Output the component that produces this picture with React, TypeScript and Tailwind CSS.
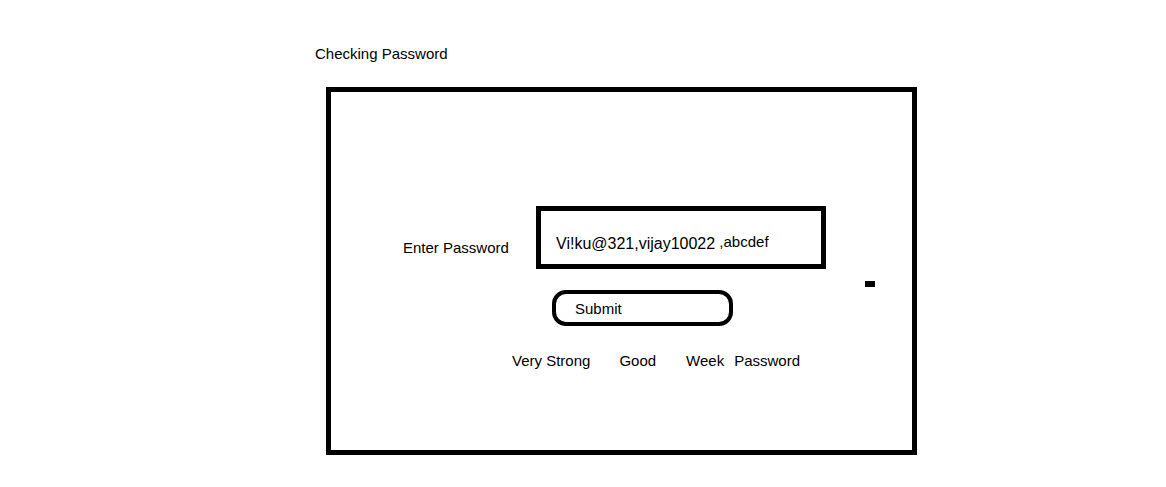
import { useState } from "react";

export default function App() {
  const [password, setPassword] = useState("");

  return (
    <div
      className="min-h-screen bg-white text-black"
      style={{ fontFamily: '"Liberation Sans", Arial, sans-serif' }}
    >
      {/* Title */}
      <div className="pl-[315px] pt-[45px] text-[15px] leading-[17px]">Checking Password</div>

      {/* Main box */}
      <div className="ml-[326px] mt-[25px] w-[591px] h-[368px] border-[5px] border-black">
        {/* Password row */}
        <div className="flex items-start pl-[72px] pt-[114px]">
          <label className="w-[133px] pt-[33px] text-[15px] leading-[17px]">Enter Password</label>
          <div className="w-[290px] h-[63px] border-[5px] border-black pl-[15px] pt-[22px] text-[16px] leading-[18px] whitespace-nowrap">
            <span>Vi!ku@321,vijay10022</span>
            <span className="text-[15px] align-[2px]"> ,abcdef</span>
            <input
              type="hidden"
              value={password}
              onChange={(e) => setPassword(e.target.value)}
            />
          </div>
        </div>

        {/* Submit row */}
        <div className="flex items-start pl-[221px] mt-[12px]">
          <button className="mt-[9px] w-[181px] h-[36px] border-4 border-black rounded-[14px] text-left pl-[19px] text-[15px] leading-[17px]">
            Submit
          </button>
          <div className="ml-[132px] w-[10px] h-[6px] bg-black" />
        </div>

        {/* Strength labels */}
        <div className="flex pl-[181px] mt-[26px] text-[15px] leading-[17px]">
          <span>Very Strong</span>
          <span className="ml-[29px]">Good</span>
          <span className="ml-[30px]">Week</span>
          <span className="ml-[10px]">Password</span>
        </div>
      </div>
    </div>
  );
}
